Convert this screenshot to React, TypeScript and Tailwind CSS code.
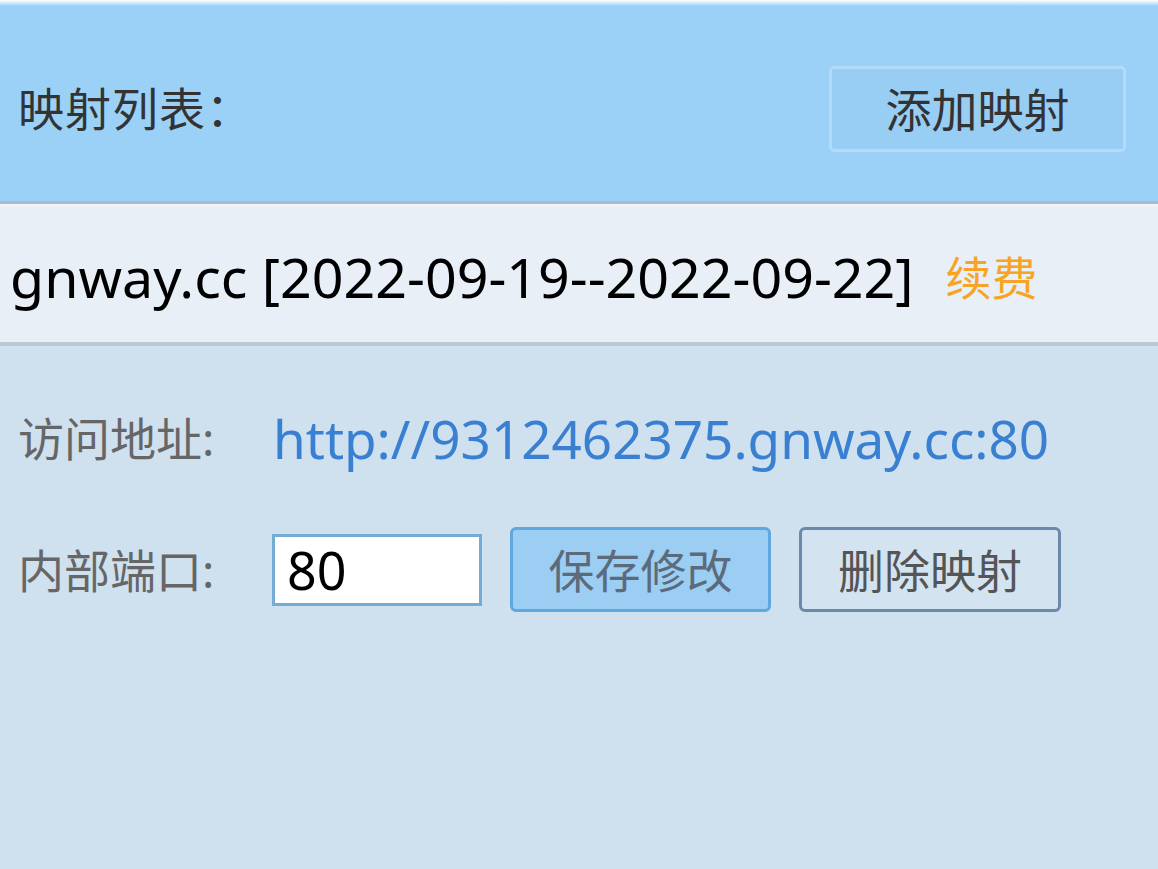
const FONT = "font-['Noto_Sans','Noto_Sans_CJK_SC',sans-serif]"

const Header = () => (
    <div className="relative h-[204px] bg-[#9bd0f7] flex items-center justify-between pl-[18px] pr-[32px] border-b-[3px] border-[#a9bccb]">
        <div className="absolute inset-x-0 top-0 h-[7px] bg-gradient-to-b from-white to-[#8fcbf5]" />
        <span className="text-[46px] text-[#333] tracking-[1px] mt-[14px]">映射列表：</span>
        <button className="h-[86px] w-[297px] rounded-[5px] border-[3px] border-[#b3dbf8] bg-[#98cdf4] text-[46px] text-[#333] mt-[16px]">
            添加映射
        </button>
    </div>
)

const DomainRow = () => (
    <div className="h-[142px] bg-[#e8eff7] flex items-center pl-[10px] border-b-[4px] border-[#b9c8d4] shadow-[inset_0_3px_0_#f0f4fa]">
        <span className="text-[55.5px] text-black mt-[8px]">gnway.cc [2022-09-19--2022-09-22]</span>
        <span className="ml-[32px] text-[46px] text-[#f7a324] mt-[8px]">续费</span>
    </div>
)

const Details = () => (
    <div className="flex-1 bg-[#cfe0ef] pl-[18px] pt-[62px]">
        <div className="flex items-center h-[60px]">
            <span className="text-[46px] text-[#666] w-[255px]">访问地址:</span>
            <a className="text-[53px] text-[#3a80d2]">http://9312462375.gnway.cc:80</a>
        </div>
        <div className="flex items-center mt-[59px]">
            <span className="text-[46px] text-[#666] w-[254px]">内部端口:</span>
            <input
                defaultValue="80"
                className="w-[210px] h-[72px] bg-white border-[3px] border-[#75acd6] px-[12px] text-[52px] text-black outline-none"
            />
            <button className="ml-[28px] w-[261px] h-[85px] rounded-[6px] border-[3px] border-[#5ea8df] bg-[#9ccdf3] text-[46px] text-[#5b6b7b]">
                保存修改
            </button>
            <button className="ml-[28px] w-[262px] h-[85px] rounded-[6px] border-[3px] border-[#6b8aab] bg-[#d4e3f0] text-[46px] text-[#555]">
                删除映射
            </button>
        </div>
    </div>
)

export default function App() {
    return (
        <div className={`${FONT} w-[1158px] h-[869px] flex flex-col overflow-hidden leading-none`}>
            <Header />
            <DomainRow />
            <Details />
        </div>
    )
}
